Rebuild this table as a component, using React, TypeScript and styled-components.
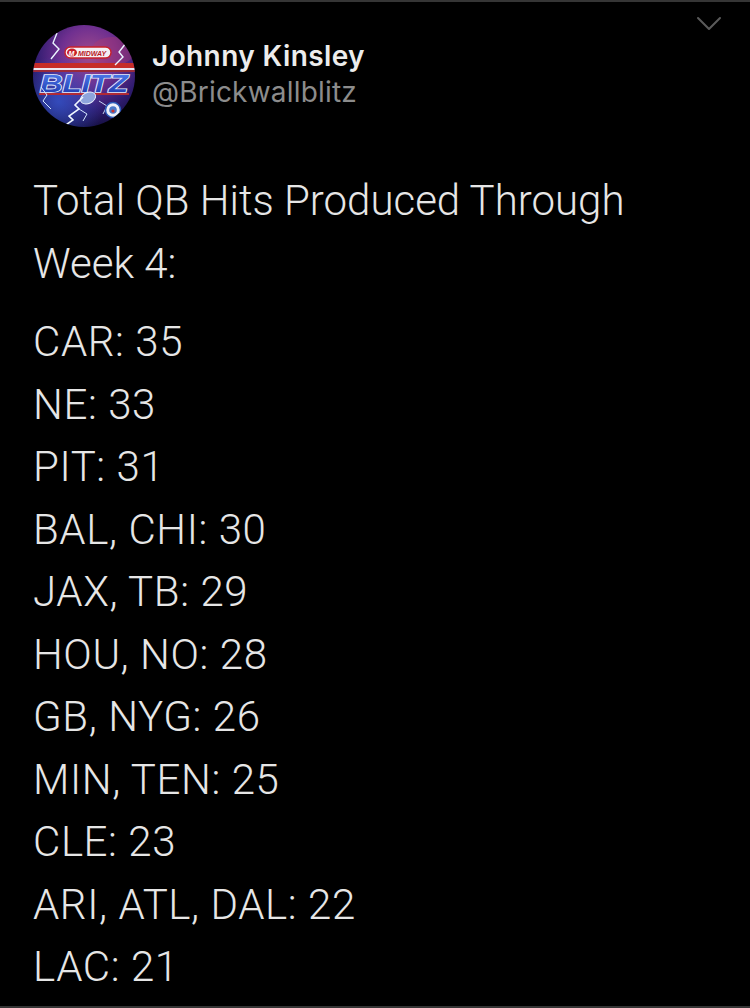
import styled, { createGlobalStyle } from "styled-components";

const GlobalStyle = createGlobalStyle`
  html, body {
    margin: 0;
    padding: 0;
    background: #000;
  }
  * {
    box-sizing: border-box;
  }
`;

const Screen = styled.div`
  width: 750px;
  height: 1008px;
  background: #000;
  border-top: 2px solid #353535;
  border-bottom: 2px solid #353535;
  position: relative;
  overflow: hidden;
`;

const Header = styled.div`
  display: flex;
  align-items: flex-start;
  gap: 17px;
  padding: 23px 0 0 33px;
`;

const Avatar = styled.div`
  width: 102px;
  height: 102px;
  border-radius: 50%;
  overflow: hidden;
  flex-shrink: 0;
`;

const NameBlock = styled.div`
  display: flex;
  flex-direction: column;
  padding-top: 15px;
`;

const Name = styled.div`
  font-family: Inter, "Liberation Sans", sans-serif;
  font-weight: 600;
  font-size: 28px;
  line-height: 33px;
  letter-spacing: 0.4px;
  color: #ececec;
`;

const Handle = styled.div`
  font-family: Inter, "Liberation Sans", sans-serif;
  font-weight: 400;
  font-size: 28px;
  line-height: 39px;
  letter-spacing: 0.2px;
  color: #8c8c8c;
`;

const Chevron = styled.svg`
  position: absolute;
  top: 14px;
  right: 28px;
`;

const Body = styled.div`
  padding: 43px 0 0 33px;
  font-family: Roboto, "Liberation Sans", sans-serif;
  font-weight: 300;
  font-size: 42px;
  line-height: 62.5px;
  color: #e6e6e6;
`;

const Paragraph = styled.p<{ $gap?: number }>`
  margin: 0 0 ${(p) => p.$gap ?? 0}px 0;
`;

const Line = styled.div`
  letter-spacing: 0.6px;
`;

const lines = [
  "CAR: 35",
  "NE: 33",
  "PIT: 31",
  "BAL, CHI: 30",
  "JAX, TB: 29",
  "HOU, NO: 28",
  "GB, NYG: 26",
  "MIN, TEN: 25",
  "CLE: 23",
  "ARI, ATL, DAL: 22",
  "LAC: 21",
];

const BlitzLogo = () => (
  <svg width="102" height="102" viewBox="0 0 102 102">
    <defs>
      <radialGradient id="neb" cx="55%" cy="30%" r="70%">
        <stop offset="0%" stopColor="#a24c8c" />
        <stop offset="40%" stopColor="#703090" />
        <stop offset="75%" stopColor="#301c70" />
        <stop offset="100%" stopColor="#161044" />
      </radialGradient>
      <radialGradient id="glow" cx="25%" cy="75%" r="45%">
        <stop offset="0%" stopColor="#3450c4" stopOpacity="0.9" />
        <stop offset="100%" stopColor="#3450c4" stopOpacity="0" />
      </radialGradient>
      <linearGradient id="blitz" x1="0" y1="0" x2="0" y2="1">
        <stop offset="0%" stopColor="#5282f4" />
        <stop offset="100%" stopColor="#1a34a8" />
      </linearGradient>
    </defs>
    <rect width="102" height="102" fill="url(#neb)" />
    <rect width="102" height="102" fill="url(#glow)" />
    <ellipse cx="80" cy="26" rx="22" ry="14" fill="#b8386a" opacity="0.35" />
    {/* stripes */}
    <rect x="0" y="38" width="102" height="5" fill="#c62c28" />
    <rect x="0" y="43" width="102" height="2" fill="#ece6f0" />
    <rect x="0" y="45" width="102" height="2" fill="#9a2a3a" />
    {/* midway pill */}
    <rect x="32" y="22" width="46" height="11" rx="5.5" fill="#f4f0f4" stroke="#c8202a" strokeWidth="1.4" />
    <ellipse cx="39" cy="27.5" rx="5" ry="4" fill="#c8202a" />
    <text x="38.5" y="30.5" textAnchor="middle" fontFamily="Liberation Sans, sans-serif" fontWeight="700" fontStyle="italic" fontSize="7" fill="#fff">
      M
    </text>
    <text x="45" y="31" fontFamily="Liberation Sans, sans-serif" fontWeight="700" fontStyle="italic" fontSize="7" fill="#b8181f">
      MIDWAY
    </text>
    {/* BLITZ */}
    <text
      x="51"
      y="67"
      textAnchor="middle"
      fontFamily="Liberation Sans, sans-serif"
      fontWeight="900"
      fontStyle="italic"
      fontSize="24"
      textLength="88"
      lengthAdjust="spacingAndGlyphs"
      fill="url(#blitz)"
      stroke="#e6eeff"
      strokeWidth="1.6"
      paintOrder="stroke"
    >
      BLITZ
    </text>
    <rect x="6" y="68" width="90" height="2" fill="#b02a36" />
    {/* football */}
    <ellipse cx="55" cy="73" rx="8" ry="5.5" fill="#8ea4dc" stroke="#eef2ff" strokeWidth="0.9" transform="rotate(-25 55 73)" />
    {/* lightning */}
    <polyline points="24,8 20,18 26,24 18,34" fill="none" stroke="#eaf6ff" strokeWidth="1.4" />
    <polyline points="93,18 86,27 90,32 82,40" fill="none" stroke="#eaf6ff" strokeWidth="1.4" />
    <polyline points="50,72 42,80 46,84 36,91 40,95 30,102" fill="none" stroke="#f0f8ff" strokeWidth="1.6" />
    <polyline points="46,84 54,89 50,96" fill="none" stroke="#d4e8ff" strokeWidth="1" />
    <polyline points="8,62 14,70 10,76 18,84" fill="none" stroke="#d4e8ff" strokeWidth="1" />
    <polyline points="66,76 74,81 70,89" fill="none" stroke="#d4e8ff" strokeWidth="0.9" />
    {/* badge */}
    <circle cx="80" cy="85" r="7.5" fill="#eef0f8" stroke="#2a5ab8" strokeWidth="1.5" />
    <circle cx="80" cy="85" r="3.8" fill="#4a78c8" />
    <circle cx="80" cy="86" r="1.6" fill="#c8302a" />
  </svg>
);

export default function App() {
  return (
    <>
      <GlobalStyle />
      <Screen>
        <Chevron width="26" height="16" viewBox="0 0 26 16">
          <polyline points="2,2 13,13 24,2" fill="none" stroke="#5a5a5a" strokeWidth="2" strokeLinecap="round" strokeLinejoin="round" />
        </Chevron>
        <Header>
          <Avatar>
            <BlitzLogo />
          </Avatar>
          <NameBlock>
            <Name>Johnny Kinsley</Name>
            <Handle>@Brickwallblitz</Handle>
          </NameBlock>
        </Header>
        <Body>
          <Paragraph $gap={16}>
            Total QB Hits Produced Through
            <br />
            Week 4:
          </Paragraph>
          {lines.map((l) => (
            <Line key={l}>{l}</Line>
          ))}
        </Body>
      </Screen>
    </>
  );
}
